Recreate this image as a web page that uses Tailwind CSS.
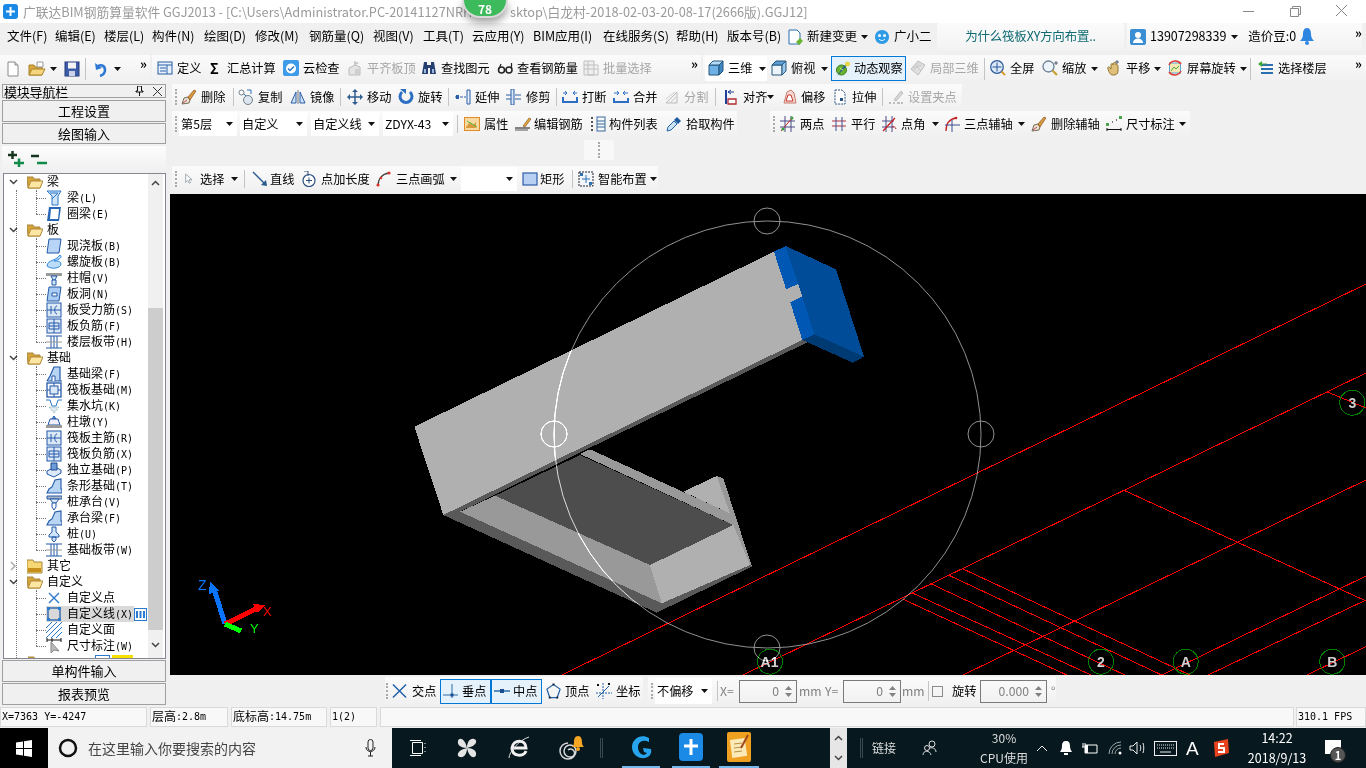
<!DOCTYPE html>
<html lang="zh">
<head>
<meta charset="UTF-8">
<title>GGJ2013</title>
<script src="https://cdn.jsdelivr.net/npm/@tailwindcss/browser@4"></script>
</head>
<body class="bg-[#f0f0f0]">

<!-- shared icons -->
<svg class="absolute w-0 h-0">
  <symbol id="car" viewBox="0 0 7 4"><path d="M0 0h7L3.500 4z" fill="#111"/></symbol>
  <symbol id="new" viewBox="0 0 16 16"><path d="M3 1h7l3 3v11H3z" fill="#fff" stroke="#8a8a8a"/><path d="M10 1v3h3" fill="#ddd" stroke="#8a8a8a"/></symbol>
  <symbol id="open" viewBox="0 0 18 16"><path d="M1 4h5l1 2h7v8H1z" fill="#d9a63c" stroke="#a98328"/><path d="M9 1h6v5H9z" fill="#fff" stroke="#999"/><path d="M1 14l3-6h13l-3 6z" fill="#f6d57f" stroke="#a98328"/></symbol>
  <symbol id="save" viewBox="0 0 16 16"><rect x="1" y="1" width="14" height="14" fill="#3d5ca8" stroke="#223a78"/><rect x="4" y="1.500" width="8" height="6" fill="#f4f4f4"/><rect x="5" y="10" width="6" height="5" fill="#c9d3ea"/></symbol>
  <symbol id="undo" viewBox="0 0 16 16"><path d="M2 2l1 7 6-2z" fill="#2c78d4"/><path d="M4 6c3-3 8-2 8 3 0 3-2 5-5 6" fill="none" stroke="#2c78d4" stroke-width="2.500"/></symbol>
  <symbol id="def" viewBox="0 0 16 16"><rect x="1" y="2" width="14" height="12" fill="#e6f0fa" stroke="#2a5ea8"/><path d="M1 5h14M3 8h6M3 11h6M10 5v9" stroke="#2a5ea8"/></symbol>
  <symbol id="cloud" viewBox="0 0 16 16"><rect width="16" height="16" rx="2" fill="#3d9be9"/><circle cx="8" cy="8.500" r="5" fill="#fff"/><path d="M5 8.500l2 2 4-4" stroke="#2a78c4" stroke-width="1.500" fill="none"/></symbol>
  <symbol id="flat" viewBox="0 0 16 16"><path d="M2 15V8l6-3 5 2v8z" fill="#e4e4e4" stroke="#bcbcbc"/><path d="M7 1l5 2-5 3z" fill="#c8c8c8"/><path d="M8 9h4v6H8z" fill="#cfcfcf"/></symbol>
  <symbol id="bino" viewBox="0 0 16 16"><path d="M3 2h3v3h4V2h3l2 12H9V8H7v6H1z" fill="#27406f"/><path d="M3 9h2v4H3zM11 9h2v4h-2z" fill="#9db6dd"/></symbol>
  <symbol id="glass" viewBox="0 0 16 16"><circle cx="4.500" cy="10" r="3" fill="none" stroke="#222" stroke-width="1.500"/><circle cx="12" cy="10" r="3" fill="none" stroke="#222" stroke-width="1.500"/><path d="M2 9l2-5M14.500 9V3M7.500 10h1.500" stroke="#222" stroke-width="1.200"/></symbol>
  <symbol id="batch" viewBox="0 0 16 16"><path d="M1 1h10v14H1z" fill="#eee" stroke="#c0c0c0"/><path d="M1 5h14v10H5M1 9h14M5 1v14" fill="none" stroke="#c0c0c0"/></symbol>
  <symbol id="cube" viewBox="0 0 16 16"><path d="M1 5h10v10H1z" fill="#6fb1e4" stroke="#24577f"/><path d="M1 5l4-4h10l-4 4z" fill="#b6dbf5" stroke="#24577f"/><path d="M11 5l4-4v10l-4 4z" fill="#3f86bf" stroke="#24577f"/></symbol>
  <symbol id="topv" viewBox="0 0 16 16"><path d="M1 5h10v10H1z" fill="#e8f2fb" fill-opacity=".7" stroke="#24577f"/><path d="M1 5l4-4h10l-4 4z" fill="#5c9ed3" stroke="#24577f"/><path d="M11 5l4-4v10l-4 4z" fill="#9cc7e8" stroke="#24577f"/></symbol>
  <symbol id="orbit" viewBox="0 0 16 16"><circle cx="6.500" cy="9" r="5" fill="#69b52f" stroke="#3a7a18"/><path d="M2 15l6-9 3-3 1 1-3 4z" fill="#2d5f88"/><circle cx="12.500" cy="3" r="2.500" fill="#e7d84a"/><path d="M5 7l3 2" stroke="#c3e69a"/></symbol>
  <symbol id="loc3" viewBox="0 0 16 16"><path d="M8 1l7 4-7 10-7-6z" fill="#e0e0e0" stroke="#bdbdbd"/><path d="M5 4l6 7M9 3l-5 7M3 8l9-3" stroke="#c8c8c8"/></symbol>
  <symbol id="full" viewBox="0 0 16 16"><circle cx="7" cy="7" r="6.300" fill="#dae8f8" stroke="#2b579a" stroke-width="1.200"/><path d="M7 2.500v9M2.500 7h9" stroke="#2b579a"/><path d="M11.500 11.500L15 15" stroke="#d89a2e" stroke-width="2"/></symbol>
  <symbol id="zoom" viewBox="0 0 16 16"><circle cx="6.500" cy="6.500" r="5.500" fill="#edf3fb" stroke="#6c7f96" stroke-width="1.300"/><path d="M10.500 10.500L15 15" stroke="#caa033" stroke-width="2.200"/><path d="M14 1v4M12 3h4" stroke="#345" stroke-width=".8"/></symbol>
  <symbol id="pan" viewBox="0 0 16 16"><path d="M2 9c-1-2 1-3 2-1l1 1V5c0-2 2-2 2 0V4c0-2 3-2 3 0v1c1-1 2 0 2 1v5c0 3-2 4-5 4-3 0-4-3-5-6z" fill="#dfc07a" stroke="#907232"/><path d="M11 0v4M9 2h4" stroke="#345" stroke-width=".8"/></symbol>
  <symbol id="scr" viewBox="0 0 16 16"><rect x="2.500" y="3" width="11" height="10" fill="#f4e9b5" stroke="#5aa6d8"/><path d="M4 11l3-4 2 2 3-3" stroke="#55a630" fill="none"/><path d="M2 5a7 7 0 0 1 12-1M14 11a7 7 0 0 1-12 1" fill="none" stroke="#dc3b30" stroke-width="1.500"/></symbol>
  <symbol id="floor" viewBox="0 0 16 16"><path d="M3 4h12v2H3zM3 8h12v2H3zM3 12h12v2H3z" fill="#2b6fb1"/><path d="M0 4l4-3v6z" fill="#3fa535"/><path d="M3 4h6" stroke="#3fa535"/></symbol>
  <symbol id="del" viewBox="0 0 16 16"><path d="M1 15l2-6 4-1 2 3-1 3z" fill="#e9e2d0" stroke="#7a6f56"/><path d="M7 8l6-7 2 1-6 9z" fill="#d89a3a" stroke="#7a3f12" stroke-width=".6"/><path d="M2 14l4-3" stroke="#c3476a"/></symbol>
  <symbol id="copy" viewBox="0 0 16 16"><circle cx="3.500" cy="3.500" r="2.500" fill="#fff" stroke="#6f7d8a"/><circle cx="10" cy="11" r="4.500" fill="#dde6ee" stroke="#6f7d8a"/><path d="M6 5l2 2" stroke="#2a6fb3"/><path d="M9 1h4v4" fill="none" stroke="#2a6fb3"/></symbol>
  <symbol id="mirr" viewBox="0 0 16 16"><path d="M8 1v14" stroke="#777"/><path d="M6 3v11H1z" fill="#cfe2f4" stroke="#2a5ea8"/><path d="M10 3v11h5z" fill="#cfe2f4" stroke="#2a5ea8"/></symbol>
  <symbol id="move" viewBox="0 0 16 16"><path d="M8 1v14M1 8h14" stroke="#2f5d8f" stroke-width="1.500"/><path d="M8 0l3 3H5zM8 16l3-3H5zM0 8l3-3v6zM16 8l-3-3v6z" fill="#2f5d8f"/></symbol>
  <symbol id="rot" viewBox="0 0 16 16"><path d="M4 3a6 6 0 1 0 8 0" fill="none" stroke="#2b6ec2" stroke-width="3"/><path d="M2 0h6v5z" fill="#2b6ec2"/></symbol>
  <symbol id="ext" viewBox="0 0 16 16"><path d="M0 8h3M5 8h3M9 8h2" stroke="#2b5ea8"/><path d="M12 1h3v14h-3z" fill="#e8f0fa" stroke="#2b5ea8"/><path d="M1 6h3v4H1z" fill="#2b5ea8"/></symbol>
  <symbol id="trim" viewBox="0 0 16 16"><path d="M5 0h3v16H5z" fill="#d8e5f5" stroke="#2b5ea8"/><path d="M0 6h5M0 10h5M9 6h6M9 10h6" stroke="#2b5ea8"/></symbol>
  <symbol id="brk" viewBox="0 0 16 16"><path d="M1 8V13h14V8" fill="none" stroke="#2b6ec2" stroke-width="2"/><path d="M1 4h4M15 4h-4M3 2l2 2-2 2M13 2l-2 2 2 2" fill="none" stroke="#2b6ec2"/></symbol>
  <symbol id="mrg" viewBox="0 0 16 16"><path d="M1 9V13h14V9" fill="none" stroke="#2b6ec2" stroke-width="2"/><path d="M1 4h5M15 4h-5M4 2l2 2-2 2M12 2l-2 2 2 2" fill="none" stroke="#2b6ec2"/></symbol>
  <symbol id="spl" viewBox="0 0 16 16"><path d="M2 14L13 3v11z" fill="#f0f0f0" stroke="#bdbdbd"/><path d="M2 10l9-7M6 14l7-7" stroke="#cfcfcf"/></symbol>
  <symbol id="alg" viewBox="0 0 16 16"><path d="M2 1h2v14H2z" fill="#1f3f99"/><path d="M5 3h6M5 3l3-2M5 3l3 2" stroke="#1f3f99" fill="none"/><path d="M5 10h8v5H5z" fill="#fff" stroke="#b02a30" stroke-width="1.300"/></symbol>
  <symbol id="ofs" viewBox="0 0 16 16"><path d="M3 14L6 3l4-2 3 3 2 10z" fill="#f5d9d2" stroke="#c97a6c"/><path d="M5 12l2-6h3l2 6z" fill="#fff" stroke="#c83a2e"/></symbol>
  <symbol id="str" viewBox="0 0 16 16"><path d="M3 1h7l3 3v11H3z" fill="#fff" stroke="#29527f" stroke-dasharray="2 1"/><path d="M8 9h3v3H8z" fill="#29527f"/></symbol>
  <symbol id="grip" viewBox="0 0 16 16"><path d="M6 11l7-9 2 2-7 8z" fill="#d8d8d8" stroke="#bdbdbd"/><path d="M1 14h2M5 14h2M9 14h3M13 14h2" stroke="#bdbdbd" stroke-width="2"/></symbol>
  <symbol id="attr" viewBox="0 0 16 16"><rect x=".500" y="1.500" width="15" height="13" fill="#f9d9a3" stroke="#e28b27"/><path d="M2 11l4-5 3 3 3-3v6H2z" fill="#d89a3a"/><path d="M3 5l10 6" stroke="#5b4"/></symbol>
  <symbol id="edit" viewBox="0 0 18 16"><path d="M1 12h15" stroke="#111"/><path d="M1 14h13" stroke="#111" stroke-width=".7"/><path d="M9 10l6-8 2 1-6 8z" fill="#e3a53d" stroke="#7a4b12" stroke-width=".6"/></symbol>
  <symbol id="list" viewBox="0 0 16 16"><path d="M1 2h3M1 6h3M1 10h3M1 14h3" stroke="#555" stroke-width="2" stroke-dasharray="2 1"/><rect x="7" y="1" width="8" height="14" fill="#f5f8fb" stroke="#3b6a99"/><path d="M7 5h8M7 8h8M7 11h8" stroke="#3b6a99"/></symbol>
  <symbol id="pick" viewBox="0 0 16 16"><path d="M1 15l1-4 6-6 3 3-6 6z" fill="#cfe3f7" stroke="#2366a8"/><path d="M8 4l3-3 4 4-3 3z" fill="#1f5c9f"/></symbol>
  <symbol id="twop" viewBox="0 0 16 16"><path d="M0 5h15M0 11h15M5 0v16M11 0v16" stroke="#4a4a8a"/><path d="M1 15L13 1" stroke="#c23030"/><circle cx="3" cy="13" r="1.500" fill="#3ba33b"/><circle cx="12" cy="2" r="1.500" fill="#3ba33b"/></symbol>
  <symbol id="para" viewBox="0 0 16 16"><path d="M1 5h14M1 10h14" stroke="#b02c3c"/><path d="M5 1v14M11 1v14" stroke="#3a4f8f"/></symbol>
  <symbol id="ang" viewBox="0 0 16 16"><path d="M0 5h12M0 11h12M4 0v16M10 0v16" stroke="#4a4a8a"/><path d="M1 15L13 2" stroke="#c82020" stroke-width="1.300"/><path d="M10 11a3 3 0 0 1 4 2" stroke="#c82020" fill="none"/></symbol>
  <symbol id="thr" viewBox="0 0 16 16"><path d="M2 15c0-7 3-12 10-13" fill="none" stroke="#c82020" stroke-width="1.300"/><path d="M1 9h15M8 4v12" stroke="#3a4f8f"/><circle cx="12" cy="2" r="1.300" fill="#c82020"/></symbol>
  <symbol id="dim" viewBox="0 0 16 16"><path d="M1 12v3M15 12v3M1 13.500h14" stroke="#111"/><rect x="0" y="7" width="3" height="3" fill="#4aa64a"/><rect x="13" y="0" width="3" height="3" fill="#4aa64a"/><path d="M6 6h1M10 4h1" stroke="#777" stroke-width="2"/></symbol>
  <symbol id="cur" viewBox="0 0 10 16"><path d="M1 1v12l3-3 2 4 2-1-2-4h4z" fill="#fff" stroke="#7b8794"/></symbol>
  <symbol id="lin" viewBox="0 0 16 16"><path d="M1 1l13 13" stroke="#2a5b8f" stroke-width="1.500"/><path d="M15 15l-6-1 5-5z" fill="#2a5b8f"/></symbol>
  <symbol id="lng" viewBox="0 0 16 16"><circle cx="8" cy="9.500" r="6" fill="#fff" stroke="#2a4f7f" stroke-width="1.200"/><path d="M8 6.500v6M5 9.500h6" stroke="#2a4f7f"/><path d="M3 0h4v5" fill="none" stroke="#2a4f7f"/></symbol>
  <symbol id="arc" viewBox="0 0 16 16"><path d="M2 15C2 8 6 3 13 2" fill="none" stroke="#444" stroke-width="1.300"/><circle cx="2" cy="14" r="1.600" fill="#d9342b"/><circle cx="13" cy="2" r="1.600" fill="#d9342b"/><circle cx="5" cy="7" r="1.300" fill="#d9342b"/></symbol>
  <symbol id="rct" viewBox="0 0 16 16"><rect x="1" y="2" width="14" height="12" fill="#b8d0f2" stroke="#2f5da8" stroke-width="1.200"/></symbol>
  <symbol id="smart" viewBox="0 0 16 16"><rect x="1" y="1" width="14" height="14" fill="#f3f6fa" stroke="#223" stroke-dasharray="2 1"/><path d="M8 4v8M4 8h8" stroke="#2d6fb3"/><rect x="2" y="2" width="3" height="3" fill="#2d6fb3"/><rect x="11" y="11" width="3" height="3" fill="#2d6fb3"/></symbol>
  <symbol id="xpt" viewBox="0 0 16 16"><path d="M1 1l14 14M15 1L1 15" stroke="#1d5fa8" stroke-width="1.500"/></symbol>
  <symbol id="vpt" viewBox="0 0 16 16"><path d="M9 1v14M0 12h15" stroke="#2c6aa8"/><rect x="7.500" y="10.500" width="3" height="3" fill="#1a4f8f"/></symbol>
  <symbol id="mpt" viewBox="0 0 16 16"><path d="M0 8h16" stroke="#2c6aa8" stroke-width="1.500"/><rect x="6" y="6" width="4" height="4" fill="#1a4f8f"/></symbol>
  <symbol id="vtx" viewBox="0 0 16 16"><path d="M8 1l7 5-3 9H4L1 6z" fill="none" stroke="#2463a8" stroke-width="1.300"/><rect x="7" y="0" width="2" height="2" fill="#123"/><rect x="3" y="14" width="2" height="2" fill="#123"/><rect x="11" y="14" width="2" height="2" fill="#123"/></symbol>
  <symbol id="crd" viewBox="0 0 16 16"><path d="M7 0v16M0 10h16" stroke="#2463a8" stroke-dasharray="2 1"/><path d="M2 14L13 3" stroke="#2463a8"/><path d="M1 1l2 2M3 1L1 3M12 0l2 2M14 0l-2 2" stroke="#111"/></symbol>
  <symbol id="fo" viewBox="0 0 16 16"><path d="M0 3h6l1 2h6v9H1z" fill="#d6a23a" stroke="#a8863e"/><path d="M1 14l3-7h12l-3 7z" fill="#fde6a4" stroke="#b08a30"/></symbol>
  <symbol id="fc" viewBox="0 0 16 16"><path d="M0 2h6l1 2h8v11H0z" fill="#f7d774" stroke="#a8863e"/><path d="M1 10h13v4H1z" fill="#c68f1c"/></symbol>
  <symbol id="dn" viewBox="0 0 9 6"><path d="M1 1l3.500 3.500L8 1" fill="none" stroke="#444" stroke-width="1.500"/></symbol>
  <symbol id="rg" viewBox="0 0 9 10"><path d="M2 1l4 4-4 4" fill="none" stroke="#aaa" stroke-width="1.500"/></symbol>
  <symbol id="t1" viewBox="0 0 16 16"><path d="M1 1h14l-3 5v9H6V6z" fill="#cfe4f8" stroke="#2b79c9"/><path d="M4 3h8l-6 6" stroke="#2b79c9" fill="none"/></symbol>
  <symbol id="t2" viewBox="0 0 16 16"><path d="M3 1h12l-2 14H1z" fill="#2a66b8"/><path d="M5 3h8l-1 10H4z" fill="#fff"/></symbol>
  <symbol id="t3" viewBox="0 0 16 16"><path d="M3 1h12l-2 14H1z" fill="#b8d4f6" stroke="#2259a8"/></symbol>
  <symbol id="t4" viewBox="0 0 16 16"><path d="M1 12C2 5 9 8 14 1c3 2-1 5-6 6 3 0 7 0 7 3 0 4-9 6-14 2z" fill="#bcdcf8" stroke="#2f8ae0"/></symbol>
  <symbol id="t5" viewBox="0 0 16 16"><path d="M0 3h16v3H0z" fill="#9a9a9a"/><path d="M5 6h6l-2 4H7z" fill="#cfe4f8" stroke="#2459a8"/><path d="M6 10h4v5H6z" fill="#cfe4f8" stroke="#2459a8"/></symbol>
  <symbol id="t6" viewBox="0 0 16 16"><path d="M3 1h12l-2 14H1z" fill="#a9caf2" stroke="#2259a8"/><path d="M6 7h5v3H6z" fill="#fff" stroke="#2259a8"/></symbol>
  <symbol id="t7" viewBox="0 0 16 16"><rect x="1" y="1" width="14" height="14" fill="#dbe8f8" stroke="#2259a8"/><path d="M1 8h14M5 4v8M11 4c-3 0-3 8 0 8" stroke="#2259a8" fill="none"/></symbol>
  <symbol id="t8" viewBox="0 0 16 16"><rect x="1" y="1" width="14" height="14" fill="#dbe8f8" stroke="#2259a8"/><path d="M3 5h10v6H3zM8 1v14M3 8h10" stroke="#2259a8" fill="none"/></symbol>
  <symbol id="t9" viewBox="0 0 16 16"><path d="M0 2h16M0 14h16M5 2v12M11 2v12M8 2v12" stroke="#2259a8"/><path d="M0 8h16" stroke="#999"/></symbol>
  <symbol id="t10" viewBox="0 0 16 16"><path d="M1 15l3-5 4-9h6v14h2M1 15h15" fill="#b9d5f4" stroke="#2259a8" stroke-width="1.200"/><path d="M6 15v-5h3v5" fill="#fff" stroke="#2259a8"/></symbol>
  <symbol id="t11" viewBox="0 0 16 16"><rect x="1" y="1" width="14" height="14" fill="#fff" stroke="#2259a8" stroke-width="1.300"/><rect x="4" y="4" width="8" height="8" fill="#dbe8f8" stroke="#2259a8"/><path d="M1 8h3M12 8h3M8 1v3M8 12v3" stroke="#2259a8"/></symbol>
  <symbol id="t12" viewBox="0 0 16 16"><path d="M0 2h4l2 6h4l2-6h4" fill="none" stroke="#2b79c9"/><path d="M3 9l5 6 5-6z" fill="#dfe8f0" stroke="#8aa" stroke-dasharray="1 1"/></symbol>
  <symbol id="t13" viewBox="0 0 16 16"><path d="M6 5l2-3 2 3z" fill="#6aa0e0" stroke="#2259a8"/><path d="M4 5h8l2 6H2z" fill="#eef" stroke="#2259a8"/><rect x="0" y="11" width="16" height="3" fill="#9a9a9a"/></symbol>
  <symbol id="t14" viewBox="0 0 16 16"><path d="M1 9l8-4 6 3v3l-7 4-7-3z" fill="#dce9f8" stroke="#2259a8"/><path d="M5 1h6v7H5z" fill="#6d9bd8" stroke="#1f4a8f"/></symbol>
  <symbol id="t15" viewBox="0 0 16 16"><path d="M1 15l2-4 3-2 3-7 6-1v10h1v4z" fill="#b9d5f4" stroke="#2259a8" stroke-width="1.100"/></symbol>
  <symbol id="t16" viewBox="0 0 16 16"><path d="M1 2h15v3H1z" fill="#b0b6c0" stroke="#2259a8"/><path d="M4 5h9l-3 4H7z" fill="#dce9f8" stroke="#2259a8"/><path d="M6 9h4v4l-2 3-2-3z" fill="#fff" stroke="#2259a8"/></symbol>
  <symbol id="t17" viewBox="0 0 16 16"><path d="M6 1h4v5l3 3v2H3V9l3-3zM6 11h4v3l-2 2-2-2z" fill="#cfe4f8" stroke="#2259a8"/></symbol>
  <symbol id="t18" viewBox="0 0 16 16"><path d="M3 3l10 10M13 3L3 13" stroke="#2c78c8" stroke-width="1.400"/></symbol>
  <symbol id="t19" viewBox="0 0 16 16"><rect x="2" y="2" width="12" height="12" fill="none" stroke="#1f5faa" stroke-width="1.300"/><rect x="1" y="1" width="3" height="3" fill="#2b7bd0"/><rect x="12" y="1" width="3" height="3" fill="#2b7bd0"/><rect x="1" y="12" width="3" height="3" fill="#2b7bd0"/><rect x="12" y="12" width="3" height="3" fill="#2b7bd0"/></symbol>
  <symbol id="t20" viewBox="0 0 16 16"><path d="M0 6l6-6M0 11L11 0M0 16L16 0M5 16L16 5M10 16l6-6" stroke="#2c78c8"/></symbol>
  <symbol id="t21" viewBox="0 0 16 16"><path d="M1 2h14M1 0v4M6 0v4M15 0v4" stroke="#111"/><path d="M5 4v11l3-3 5 1z" fill="#bbb" stroke="#888"/></symbol>
</svg>

<div class="relative w-[1366px] h-[768px] overflow-hidden flex flex-col bg-[#f0f0f0] whitespace-nowrap text-[12.2px] text-black font-['Noto_Sans_CJK_SC',sans-serif] [&_svg]:shrink-0">

  <!-- title bar -->
  <header class="relative h-[23px] shrink-0 bg-white flex items-center pl-[3px] text-[12.75px] text-[#9a9a9a]">
    <div class="w-[15px] h-[15px] mr-[5px] rounded-[3px] bg-[#1a8ae6] flex items-center justify-center">
      <svg class="w-[11px] h-[11px]" viewBox="0 0 11 11"><path d="M5.500 1v9M1 5.500h9" stroke="#fff" stroke-width="2" fill="none"/></svg>
    </div>
    <span class="w-[439px]">广联达BIM钢筋算量软件 GGJ2013 - [C:\Users\Administrator.PC-20141127NRHI</span>
    <span class="ml-[48px]">sktop\白龙村-2018-02-03-20-08-17(2666版).GGJ12]</span>
    <div class="absolute left-[462px] top-0 w-[46px] h-[18px] rounded-b-[23px] bg-[#3dbb5c] border-x-2 border-b-2 border-[#d8d8d8] shadow-[0_4px_8px_rgba(0,0,0,0.4)] flex items-end justify-center text-white font-bold text-[12px] leading-[15px]">78</div>
    <svg class="absolute left-[1243px] top-[6px] w-[11px] h-[11px]" viewBox="0 0 11 11"><path d="M0 5.500h11" stroke="#888"/></svg>
    <svg class="absolute left-[1290px] top-[6px] w-[11px] h-[11px]" viewBox="0 0 11 11"><path d="M.5 2.500h8v8h-8zM2.500 2.500v-2h8v8h-2" fill="none" stroke="#888"/></svg>
    <svg class="absolute left-[1336px] top-[5px] w-[11px] h-[11px]" viewBox="0 0 11 11"><path d="M0 0l11 11M11 0L0 11" stroke="#888"/></svg>
  </header>

  <!-- menu bar -->
  <nav class="h-[32px] shrink-0 flex items-start pl-[7px] text-[12.5px] bg-[#f0f0f0]">
    <div class="h-[27px] flex items-center">
      <div class="w-[48px]">文件(F)</div><div class="w-[49px]">编辑(E)</div><div class="w-[48px]">楼层(L)</div><div class="w-[52px]">构件(N)</div><div class="w-[51px]">绘图(D)</div><div class="w-[54px]">修改(M)</div><div class="w-[64px]">钢筋量(Q)</div><div class="w-[50px]">视图(V)</div><div class="w-[49px]">工具(T)</div><div class="w-[61px]">云应用(Y)</div><div class="w-[70px]">BIM应用(I)</div><div class="w-[73px]">在线服务(S)</div><div class="w-[51px]">帮助(H)</div><div class="w-[60px]">版本号(B)</div>
      <div class="w-[74px] flex items-center gap-1">
        <svg class="w-4 h-4" viewBox="0 0 16 16"><path d="M2 1h8l3 3v11H2z" fill="#fff" stroke="#2b6fb3"/><path d="M9 13l4-4 3 3-4 4z" fill="#6ab52f"/></svg>新建变更</div>
      <svg class="w-[13px] h-[4px]"><use href="#car" width="7" height="4"/></svg>
      <div class="w-[63px] flex items-center gap-1">
        <svg class="w-4 h-4" viewBox="0 0 16 16"><path d="M8 1c4 0 7 3 7 7s-3 7-7 7-7-3-7-7 3-7 7-7z" fill="#2e9be6"/><circle cx="5.500" cy="6.500" r="1.500" fill="#fff"/><circle cx="10.500" cy="6.500" r="1.500" fill="#fff"/><path d="M5 10c2 2 4 2 6 0" stroke="#fff" fill="none"/></svg>广小二</div>
      <div class="w-[187px] h-[27px] bg-linear-to-b from-[#fbfbfb] to-[#f3f3f3] rounded-t-[2px] flex items-center justify-center text-[#0f6a72] tracking-[-0.2px]">为什么筏板XY方向布置..</div>
      <div class="w-[235px] h-[27px] ml-[3px] bg-linear-to-b from-[#fbfbfb] to-[#f3f3f3] flex items-center pl-[3px]">
        <svg class="w-4 h-4 mr-1" viewBox="0 0 16 16"><rect width="16" height="16" rx="2" fill="#3a8fd4"/><circle cx="8" cy="6" r="3" fill="#fff"/><path d="M3 14c0-6 10-6 10 0z" fill="#fff"/></svg>
        <div class="w-[83px]">13907298339</div>
        <svg class="w-[17px] h-[4px]"><use href="#car" width="7" height="4"/></svg>
        <div class="w-[53px]">造价豆:0</div>
        <svg class="w-[14px] h-[17px] mr-[41px]" viewBox="0 0 14 17"><path d="M7 0c3 0 4 3 4 6 0 3 1 5 3 7H0c2-2 3-4 3-7 0-3 1-6 4-6z" fill="#2f86e0"/><circle cx="7" cy="15" r="2" fill="#2f86e0"/></svg>
        <span class="font-bold text-[13px] leading-none -mt-[8px]">»</span>
      </div>
    </div>
  </nav>

  <!-- main toolbar -->
  <div class="h-[27px] shrink-0 flex items-center bg-[#f0f0f0]">
    <div class="w-[150px] h-[27px] flex items-center pl-[5px] bg-linear-to-b from-[#fbfbfb] to-[#f0f0f0]">
      <div class="w-[23px]"><svg class="w-4 h-4"><use href="#new"/></svg></div>
      <div class="w-[22px]"><svg class="w-[18px] h-4"><use href="#open"/></svg></div>
      <svg class="w-[14px] h-[4px]"><use href="#car" width="7" height="4"/></svg>
      <div class="w-[21px]"><svg class="w-4 h-4"><use href="#save"/></svg></div>
      <i class="w-[8px] h-[22px] border-l border-[#c4c4c4]"></i>
      <div class="w-[21px]"><svg class="w-4 h-4"><use href="#undo"/></svg></div>
      <svg class="w-[26px] h-[4px]"><use href="#car" width="7" height="4"/></svg>
      <span class="font-bold text-[13px] leading-none -mt-[10px]">»</span>
    </div>
    <div class="ml-[2px] w-[549px] h-[27px] flex items-center pl-[5px] bg-linear-to-b from-[#fbfbfb] to-[#f0f0f0]">
      <div class="w-[53px] flex items-center gap-1"><svg class="w-4 h-4"><use href="#def"/></svg>定义</div>
      <div class="w-[73px] flex items-center gap-[7px]"><b class="w-[10px] text-[14px] leading-none">Σ</b>汇总计算</div>
      <div class="w-[64px] flex items-center gap-1"><svg class="w-4 h-4"><use href="#cloud"/></svg>云检查</div>
      <div class="w-[74px] flex items-center gap-1 text-[#a6a6a6]"><svg class="w-4 h-4"><use href="#flat"/></svg>平齐板顶</div>
      <div class="w-[76px] flex items-center gap-1"><svg class="w-4 h-4"><use href="#bino"/></svg>查找图元</div>
      <div class="w-[86px] flex items-center gap-1"><svg class="w-4 h-4"><use href="#glass"/></svg>查看钢筋量</div>
      <div class="w-[108px] flex items-center gap-1 text-[#a6a6a6]"><svg class="w-4 h-4"><use href="#batch"/></svg>批量选择</div>
      <span class="font-bold text-[13px] leading-none -mt-[10px]">»</span>
    </div>
    <div class="ml-[2px] w-[663px] h-[27px] flex items-center pl-[2px] bg-linear-to-b from-[#fbfbfb] to-[#f0f0f0]">
      <div class="w-[62px] h-[25px] bg-white flex items-center pl-[3px]">
        <div class="w-[51px] flex items-center gap-1"><svg class="w-4 h-4"><use href="#cube"/></svg>三维</div>
        <svg class="w-[8px] h-[4px]"><use href="#car" width="7" height="4"/></svg>
      </div>
      <div class="ml-[4px] w-[50px] flex items-center gap-1"><svg class="w-4 h-4"><use href="#topv"/></svg>俯视</div>
      <svg class="w-[10px] h-[4px]"><use href="#car" width="7" height="4"/></svg>
      <div class="w-[75px] h-[25px] border border-[#0078d7] bg-[#e5f1fb] flex items-center gap-[3px] pl-[3px]"><svg class="w-4 h-4"><use href="#orbit"/></svg>动态观察</div>
      <div class="ml-[4px] w-[74px] flex items-center gap-1 text-[#a6a6a6]"><svg class="w-4 h-4"><use href="#loc3"/></svg>局部三维</div>
      <i class="w-[6px] h-[22px] border-l border-[#c4c4c4]"></i>
      <div class="w-[52px] flex items-center gap-1"><svg class="w-4 h-4"><use href="#full"/></svg>全屏</div>
      <div class="w-[49px] flex items-center gap-1"><svg class="w-4 h-4"><use href="#zoom"/></svg>缩放</div>
      <svg class="w-[15px] h-[4px]"><use href="#car" width="7" height="4"/></svg>
      <div class="w-[48px] flex items-center gap-1"><svg class="w-4 h-4"><use href="#pan"/></svg>平移</div>
      <svg class="w-[13px] h-[4px]"><use href="#car" width="7" height="4"/></svg>
      <div class="w-[73px] flex items-center gap-1"><svg class="w-4 h-4"><use href="#scr"/></svg>屏幕旋转</div>
      <svg class="w-[10px] h-[4px]"><use href="#car" width="7" height="4"/></svg>
      <i class="w-[8px] h-[22px] border-l border-[#c4c4c4]"></i>
      <div class="w-[97px] flex items-center gap-1"><svg class="w-4 h-4"><use href="#floor"/></svg>选择楼层</div>
      <span class="font-bold text-[13px] leading-none -mt-[10px]">»</span>
    </div>
  </div>

  <div class="mt-[2px] h-[622px] shrink-0 flex">
    <!-- module navigation panel -->
    <aside class="w-[170px] shrink-0 flex flex-col pl-[2px] pr-[4px] text-[13px]">
      <div class="h-[14px] border border-[#a0a0a0] flex items-center justify-between pl-[1px] pr-[3px]">
        <span class="leading-none tracking-[-0.2px]">模块导航栏</span>
        <div class="flex items-center gap-[9px]">
          <svg class="w-[9px] h-[10px]" viewBox="0 0 9 10"><path d="M2.500 0h4v5h1.500v1H1V5h1.500zM4.500 6v4" fill="none" stroke="#111"/></svg>
          <svg class="w-[9px] h-[9px]" viewBox="0 0 9 9"><path d="M0 0l9 9M9 0L0 9" stroke="#333"/></svg>
        </div>
      </div>
      <div class="mt-[2px] h-[22px] border border-[#a0a0a0] flex items-center justify-center">工程设置</div>
      <div class="mt-[1px] h-[21px] border border-[#a0a0a0] flex items-center justify-center">绘图输入</div>
      <div class="mt-[2px] h-[26px] bg-linear-to-b from-[#fdfdfd] to-[#f0f0f0] flex items-center gap-[6px] pl-[6px]">
        <svg class="w-[17px] h-[16px]" viewBox="0 0 17 16"><path d="M0 4h9M4.500 0v8" stroke="#17361f" stroke-width="2.500"/><path d="M6 12h10M11 7.500v8.500" stroke="#0f8a4a" stroke-width="2.500"/></svg>
        <svg class="w-[16px] h-[16px]" viewBox="0 0 16 16"><path d="M0 5h8" stroke="#17361f" stroke-width="2.500"/><path d="M6 12h10" stroke="#0f8a4a" stroke-width="2.500"/></svg>
      </div>
      <!-- component tree -->
      <div class="relative mt-[1px] ml-[1px] h-[486px] w-[163px] border border-[#828790] bg-white flex overflow-hidden text-[12px] font-['DejaVu_Sans_Mono','Noto_Sans_CJK_SC',monospace] [&_b]:font-normal [&_b]:text-[10px]">
        <i class="absolute left-[12px] top-[16px] h-[470px] border-l border-dotted border-[#777]"></i>
        <i class="absolute left-[32px] top-[16px] h-[24px] border-l border-dotted border-[#777]"></i>
        <i class="absolute left-[32px] top-[64px] h-[104px] border-l border-dotted border-[#777]"></i>
        <i class="absolute left-[32px] top-[192px] h-[184px] border-l border-dotted border-[#777]"></i>
        <i class="absolute left-[32px] top-[416px] h-[56px] border-l border-dotted border-[#777]"></i>
        <div class="relative flex-1 [&>div]:h-4 [&>div]:flex [&>div]:items-center">
          <div class="pl-[5px]"><svg class="w-[9px] h-[6px] mr-[9px]"><use href="#dn"/></svg><svg class="w-4 h-4 mr-1"><use href="#fo"/></svg>梁</div>
          <div class="pl-[32px]"><i class="w-[10px] border-t border-dotted border-[#777]"></i><svg class="w-4 h-4 mr-[5px]"><use href="#t1"/></svg>梁<b>(L)</b></div>
          <div class="pl-[32px]"><i class="w-[10px] border-t border-dotted border-[#777]"></i><svg class="w-4 h-4 mr-[5px]"><use href="#t2"/></svg>圈梁<b>(E)</b></div>
          <div class="pl-[5px]"><svg class="w-[9px] h-[6px] mr-[9px]"><use href="#dn"/></svg><svg class="w-4 h-4 mr-1"><use href="#fo"/></svg>板</div>
          <div class="pl-[32px]"><i class="w-[10px] border-t border-dotted border-[#777]"></i><svg class="w-4 h-4 mr-[5px]"><use href="#t3"/></svg>现浇板<b>(B)</b></div>
          <div class="pl-[32px]"><i class="w-[10px] border-t border-dotted border-[#777]"></i><svg class="w-4 h-4 mr-[5px]"><use href="#t4"/></svg>螺旋板<b>(B)</b></div>
          <div class="pl-[32px]"><i class="w-[10px] border-t border-dotted border-[#777]"></i><svg class="w-4 h-4 mr-[5px]"><use href="#t5"/></svg>柱帽<b>(V)</b></div>
          <div class="pl-[32px]"><i class="w-[10px] border-t border-dotted border-[#777]"></i><svg class="w-4 h-4 mr-[5px]"><use href="#t6"/></svg>板洞<b>(N)</b></div>
          <div class="pl-[32px]"><i class="w-[10px] border-t border-dotted border-[#777]"></i><svg class="w-4 h-4 mr-[5px]"><use href="#t7"/></svg>板受力筋<b>(S)</b></div>
          <div class="pl-[32px]"><i class="w-[10px] border-t border-dotted border-[#777]"></i><svg class="w-4 h-4 mr-[5px]"><use href="#t8"/></svg>板负筋<b>(F)</b></div>
          <div class="pl-[32px]"><i class="w-[10px] border-t border-dotted border-[#777]"></i><svg class="w-4 h-4 mr-[5px]"><use href="#t9"/></svg>楼层板带<b>(H)</b></div>
          <div class="pl-[5px]"><svg class="w-[9px] h-[6px] mr-[9px]"><use href="#dn"/></svg><svg class="w-4 h-4 mr-1"><use href="#fo"/></svg>基础</div>
          <div class="pl-[32px]"><i class="w-[10px] border-t border-dotted border-[#777]"></i><svg class="w-4 h-4 mr-[5px]"><use href="#t10"/></svg>基础梁<b>(F)</b></div>
          <div class="pl-[32px]"><i class="w-[10px] border-t border-dotted border-[#777]"></i><svg class="w-4 h-4 mr-[5px]"><use href="#t11"/></svg>筏板基础<b>(M)</b></div>
          <div class="pl-[32px]"><i class="w-[10px] border-t border-dotted border-[#777]"></i><svg class="w-4 h-4 mr-[5px]"><use href="#t12"/></svg>集水坑<b>(K)</b></div>
          <div class="pl-[32px]"><i class="w-[10px] border-t border-dotted border-[#777]"></i><svg class="w-4 h-4 mr-[5px]"><use href="#t13"/></svg>柱墩<b>(Y)</b></div>
          <div class="pl-[32px]"><i class="w-[10px] border-t border-dotted border-[#777]"></i><svg class="w-4 h-4 mr-[5px]"><use href="#t7"/></svg>筏板主筋<b>(R)</b></div>
          <div class="pl-[32px]"><i class="w-[10px] border-t border-dotted border-[#777]"></i><svg class="w-4 h-4 mr-[5px]"><use href="#t8"/></svg>筏板负筋<b>(X)</b></div>
          <div class="pl-[32px]"><i class="w-[10px] border-t border-dotted border-[#777]"></i><svg class="w-4 h-4 mr-[5px]"><use href="#t14"/></svg>独立基础<b>(P)</b></div>
          <div class="pl-[32px]"><i class="w-[10px] border-t border-dotted border-[#777]"></i><svg class="w-4 h-4 mr-[5px]"><use href="#t15"/></svg>条形基础<b>(T)</b></div>
          <div class="pl-[32px]"><i class="w-[10px] border-t border-dotted border-[#777]"></i><svg class="w-4 h-4 mr-[5px]"><use href="#t16"/></svg>桩承台<b>(V)</b></div>
          <div class="pl-[32px]"><i class="w-[10px] border-t border-dotted border-[#777]"></i><svg class="w-4 h-4 mr-[5px]"><use href="#t15"/></svg>承台梁<b>(F)</b></div>
          <div class="pl-[32px]"><i class="w-[10px] border-t border-dotted border-[#777]"></i><svg class="w-4 h-4 mr-[5px]"><use href="#t17"/></svg>桩<b>(U)</b></div>
          <div class="pl-[32px]"><i class="w-[10px] border-t border-dotted border-[#777]"></i><svg class="w-4 h-4 mr-[5px]"><use href="#t9"/></svg>基础板带<b>(W)</b></div>
          <div class="pl-[5px]"><svg class="w-[9px] h-[10px] mr-[9px]"><use href="#rg"/></svg><svg class="w-4 h-4 mr-1"><use href="#fc"/></svg>其它</div>
          <div class="pl-[5px]"><svg class="w-[9px] h-[6px] mr-[9px]"><use href="#dn"/></svg><svg class="w-4 h-4 mr-1"><use href="#fo"/></svg>自定义</div>
          <div class="pl-[32px]"><i class="w-[10px] border-t border-dotted border-[#777]"></i><svg class="w-4 h-4 mr-[5px]"><use href="#t18"/></svg>自定义点</div>
          <div class="pl-[32px]"><i class="w-[10px] border-t border-dotted border-[#777]"></i><div class="flex items-center h-4 w-[88px] bg-[#d9d9d9]"><svg class="w-4 h-4 mr-[5px]"><use href="#t19"/></svg>自定义线<b>(X)</b></div><svg class="w-[13px] h-[13px]" viewBox="0 0 13 13"><rect x=".5" y=".5" width="12" height="12" fill="#fff" stroke="#2b7bd0"/><path d="M3 3v7M6.500 3v7M10 3v7" stroke="#2b7bd0" stroke-width="2"/></svg></div>
          <div class="pl-[32px]"><i class="w-[10px] border-t border-dotted border-[#777]"></i><svg class="w-4 h-4 mr-[5px]"><use href="#t20"/></svg>自定义面</div>
          <div class="pl-[32px]"><i class="w-[10px] border-t border-dotted border-[#777]"></i><svg class="w-4 h-4 mr-[5px]"><use href="#t21"/></svg>尺寸标注<b>(W)</b></div>
          <div class="pl-[24px]"><svg class="w-4 h-4 mr-[51px]"><use href="#fo"/></svg><i class="w-[15px] h-[15px] border border-[#2b7bd0] bg-white"></i><i class="ml-[2px] w-[21px] h-[15px] bg-[#f6e000]"></i></div>
        </div>
        <div class="w-[15px] mr-[2px] shrink-0 flex flex-col items-center bg-[#f0f0f0]">
          <svg class="mt-[6px] w-[9px] h-[6px] rotate-180"><use href="#dn"/></svg>
          <i class="mt-[122px] w-[15px] h-[322px] bg-[#cdcdcd]"></i>
          <svg class="mt-[12px] w-[9px] h-[6px]"><use href="#dn"/></svg>
        </div>
      </div>
      <div class="mt-[1px] h-[22px] border border-[#a0a0a0] flex items-center justify-center">单构件输入</div>
      <div class="mt-[1px] h-[22px] border border-[#a0a0a0] flex items-center justify-center">报表预览</div>
    </aside>

    <!-- drawing area -->
    <main class="w-[1196px] shrink-0 flex flex-col">
      <div class="h-[26px] flex">
        <div class="ml-[2px] w-[790px] h-[26px] flex items-center pl-[3px] bg-linear-to-b from-[#fbfbfb] to-[#f0f0f0]">
          <i class="w-[6px] h-[16px] border-l-2 border-dotted border-[#aaa]"></i>
          <div class="w-[52px] flex items-center gap-1"><svg class="w-4 h-4"><use href="#del"/></svg>删除</div>
          <i class="w-[5px] h-[18px] border-l border-[#c4c4c4]"></i>
          <div class="w-[52px] flex items-center gap-1"><svg class="w-4 h-4"><use href="#copy"/></svg>复制</div>
          <div class="w-[50px] flex items-center gap-1"><svg class="w-4 h-4"><use href="#mirr"/></svg>镜像</div>
          <i class="w-[7px] h-[18px] border-l border-[#c4c4c4]"></i>
          <div class="w-[51px] flex items-center gap-1"><svg class="w-4 h-4"><use href="#move"/></svg>移动</div>
          <div class="w-[50px] flex items-center gap-1"><svg class="w-4 h-4"><use href="#rot"/></svg>旋转</div>
          <i class="w-[7px] h-[18px] border-l border-[#c4c4c4]"></i>
          <div class="w-[51px] flex items-center gap-1"><svg class="w-4 h-4"><use href="#ext"/></svg>延伸</div>
          <div class="w-[50px] flex items-center gap-1"><svg class="w-4 h-4"><use href="#trim"/></svg>修剪</div>
          <i class="w-[6px] h-[18px] border-l border-[#c4c4c4]"></i>
          <div class="w-[51px] flex items-center gap-1"><svg class="w-4 h-4"><use href="#brk"/></svg>打断</div>
          <div class="w-[51px] flex items-center gap-1"><svg class="w-4 h-4"><use href="#mrg"/></svg>合并</div>
          <div class="w-[51px] flex items-center gap-1 text-[#a6a6a6]"><svg class="w-4 h-4"><use href="#spl"/></svg>分割</div>
          <i class="w-[8px] h-[18px] border-l border-[#c4c4c4]"></i>
          <div class="w-[44px] flex items-center gap-1"><svg class="w-4 h-4"><use href="#alg"/></svg>对齐</div>
          <svg class="w-[14px] h-[4px]"><use href="#car" width="7" height="4"/></svg>
          <div class="w-[51px] flex items-center gap-1"><svg class="w-4 h-4"><use href="#ofs"/></svg>偏移</div>
          <div class="w-[50px] flex items-center gap-1"><svg class="w-4 h-4"><use href="#str"/></svg>拉伸</div>
          <i class="w-[6px] h-[18px] border-l border-[#c4c4c4]"></i>
          <div class="flex items-center gap-1 text-[#a6a6a6]"><svg class="w-4 h-4"><use href="#grip"/></svg>设置夹点</div>
        </div>
      </div>
      <div class="mt-[1px] h-[26px] flex">
        <div class="ml-[2px] w-[565px] h-[26px] flex items-center pl-[3px] bg-linear-to-b from-[#fbfbfb] to-[#f0f0f0]">
          <i class="w-[4px] h-[16px] border-l-2 border-dotted border-[#aaa]"></i>
          <div class="w-[58px] h-[24px] bg-white flex items-center justify-between pl-[2px] pr-[4px]">第5层<svg class="w-[7px] h-[4px]"><use href="#car"/></svg></div>
          <div class="ml-[3px] w-[67px] h-[24px] bg-white flex items-center justify-between pl-[2px] pr-[4px]">自定义<svg class="w-[7px] h-[4px]"><use href="#car"/></svg></div>
          <div class="ml-[4px] w-[68px] h-[24px] bg-white flex items-center justify-between pl-[2px] pr-[4px]">自定义线<svg class="w-[7px] h-[4px]"><use href="#car"/></svg></div>
          <div class="ml-[4px] w-[70px] h-[24px] bg-white flex items-center justify-between pl-[2px] pr-[4px]">ZDYX-43<svg class="w-[7px] h-[4px]"><use href="#car"/></svg></div>
          <i class="ml-[4px] w-[7px] h-[18px] border-l border-[#c4c4c4]"></i>
          <div class="w-[50px] flex items-center gap-1"><svg class="w-4 h-4"><use href="#attr"/></svg>属性</div>
          <div class="w-[76px] flex items-center gap-[2px]"><svg class="w-[18px] h-4"><use href="#edit"/></svg>编辑钢筋</div>
          <div class="w-[76px] flex items-center gap-[3px]"><svg class="w-4 h-4"><use href="#list"/></svg>构件列表</div>
          <div class="flex items-center gap-1"><svg class="w-4 h-4"><use href="#pick"/></svg>拾取构件</div>
        </div>
        <div class="ml-[33px] w-[420px] h-[26px] flex items-center pl-[3px] bg-linear-to-b from-[#fbfbfb] to-[#f0f0f0]">
          <i class="w-[7px] h-[16px] border-l-2 border-dotted border-[#aaa]"></i>
          <div class="w-[51px] flex items-center gap-1"><svg class="w-4 h-4"><use href="#twop"/></svg>两点</div>
          <div class="w-[51px] flex items-center gap-1"><svg class="w-4 h-4"><use href="#para"/></svg>平行</div>
          <div class="w-[50px] flex items-center gap-[3px]"><svg class="w-4 h-4"><use href="#ang"/></svg>点角</div>
          <svg class="w-[12px] h-[4px]"><use href="#car" width="7" height="4"/></svg>
          <div class="w-[74px] flex items-center gap-1"><svg class="w-4 h-4"><use href="#thr"/></svg>三点辅轴</div>
          <svg class="w-[13px] h-[4px]"><use href="#car" width="7" height="4"/></svg>
          <div class="w-[75px] flex items-center gap-1"><svg class="w-4 h-4"><use href="#del"/></svg>删除辅轴</div>
          <div class="w-[73px] flex items-center gap-[4px]"><svg class="w-4 h-4"><use href="#dim"/></svg>尺寸标注</div>
          <svg class="w-[7px] h-[4px]"><use href="#car"/></svg>
        </div>
      </div>
      <div class="mt-[3px] ml-[414px] w-[30px] h-[20px] bg-[#f8f8f8] flex items-center justify-center">
        <i class="w-[2px] h-[16px] border-l-2 border-dotted border-[#aaa]"></i>
      </div>
      <div class="mt-[6px] ml-[2px] w-[486px] h-[26px] flex items-center pl-[3px] bg-linear-to-b from-[#fbfbfb] to-[#f0f0f0]">
        <i class="w-[10px] h-[16px] border-l-2 border-dotted border-[#aaa]"></i>
        <div class="w-[46px] flex items-center gap-[8px]"><svg class="w-[7px] h-[12px]"><use href="#cur"/></svg>选择</div>
        <svg class="w-[13px] h-[4px]"><use href="#car" width="7" height="4"/></svg>
        <i class="w-[8px] h-[18px] border-l border-[#c4c4c4]"></i>
        <div class="w-[49px] flex items-center gap-[2px]"><svg class="w-4 h-4"><use href="#lin"/></svg>直线</div>
        <div class="w-[75px] flex items-center gap-[4px]"><svg class="w-4 h-4"><use href="#lng"/></svg>点加长度</div>
        <div class="w-[74px] flex items-center gap-[4px]"><svg class="w-4 h-4"><use href="#arc"/></svg>三点画弧</div>
        <svg class="w-[11px] h-[4px]"><use href="#car" width="7" height="4"/></svg>
        <div class="w-[56px] h-[24px] bg-white flex items-center justify-end pr-[4px]"><svg class="w-[7px] h-[4px]"><use href="#car"/></svg></div>
        <div class="ml-[5px] w-[50px] flex items-center gap-[2px]"><svg class="w-4 h-4"><use href="#rct"/></svg>矩形</div>
        <i class="w-[6px] h-[18px] border-l border-[#c4c4c4]"></i>
        <div class="flex items-center gap-1"><svg class="w-4 h-4"><use href="#smart"/></svg>智能布置<svg class="-ml-[1px] w-[7px] h-[4px]"><use href="#car"/></svg></div>
      </div>

      <!-- 3D canvas -->
      <div class="mt-[2px] h-[481px] bg-black">
        <svg class="block w-[1196px] h-[481px]" viewBox="170 194 1196 481" shape-rendering="crispEdges" font-family="Liberation Sans, sans-serif">
          <!-- axis grid -->
          <g stroke="#f00" stroke-width="1" fill="none">
            <path d="M561.700 675L1366 284M743 675L1366 373M963 675L1366 480M1161.700 675L1366 576M1208 675L1366 600M1306.700 675L1366 646.700"/>
            <path d="M1123.300 490L1366 601M1326.700 391.700L1366 408M903.300 599.300L1066.700 675M911.700 592.700L1091 675M930 583.300L1125 675M948.300 575L1161.700 675M961.700 568.300L1190 675"/>
          </g>
          <g fill="none" stroke="#008000">
            <circle cx="770" cy="661.700" r="12.500"/><circle cx="1101" cy="661.700" r="12.500"/><circle cx="1185.700" cy="661.700" r="12.500"/><circle cx="1332.300" cy="661.700" r="12.500"/><circle cx="1352.300" cy="402.700" r="12.500"/>
          </g>
          <g fill="#d0d0d0" font-size="14" font-weight="bold" text-anchor="middle">
            <text x="769.500" y="667">A1</text><text x="1101" y="667">2</text><text x="1185.700" y="667">A</text><text x="1332.300" y="667">B</text><text x="1352.300" y="408">3</text>
          </g>
          <!-- slab and beam solids -->
          <path d="M443.300 515L460 511.700 661.700 603.300 750 565 751.700 566.700 656.700 612.700z" fill="#595959"/>
          <path d="M460 511.700L495 495.700 650 565 661.700 603.300z" fill="#999"/>
          <path d="M683.300 491.700L716.700 476 730 513.300z" fill="#b0b0b0"/>
          <path d="M716.700 476L723.300 478.300 751.700 566 750 565 733.300 525 730 513.300z" fill="#999"/>
          <path d="M580 454L590 449.300 730 513.300 733.300 525z" fill="#999"/>
          <path d="M495 495.700L580 455 733.300 525 650 565z" fill="#4d4d4d"/>
          <path d="M650 565L733.300 525 750 565 661.700 603.300z" fill="#b0b0b0"/>
          <path d="M443.300 515L802.300 340 808 342 580 452.500 460 511.700z" fill="#595959"/>
          <path d="M414.300 426.700L774 251.700 802.300 340 443.300 515z" fill="#b0b0b0"/>
          <path d="M774 251.700L785.700 246 814.300 334.300 802.300 340z" fill="#0058b4"/>
          <path d="M785.700 246L836 269.300 864 356.700 814.300 334.300z" fill="#004c99"/>
          <path d="M814.300 334.300L864 356.700 852.700 362.700 802.300 340z" fill="#003a73"/>
          <path d="M783 290.600L798.300 284 802.300 296.700 787 303.600z" fill="#b0b0b0"/>
          <!-- orbit ring -->
          <g class="mix-blend-plus-lighter" fill="none" stroke="#909090" shape-rendering="auto">
            <circle cx="767.500" cy="434.500" r="213.500"/><circle cx="767" cy="221" r="13"/><circle cx="554" cy="434" r="13"/><circle cx="981" cy="434" r="13"/><circle cx="767" cy="648" r="13"/>
          </g>
          <!-- axis gizmo -->
          <path d="M225 624L215 592" stroke="#0a74ff" stroke-width="5"/>
          <path d="M210 581L219 591 209 594z" fill="#0a74ff"/>
          <path d="M225 624L256 609" stroke="#f00" stroke-width="5"/>
          <path d="M265 605L253 604 258 613z" fill="#f00"/>
          <path d="M225 624L241 631" stroke="#0f0" stroke-width="5"/>
          <text x="198" y="590" font-size="14" fill="#0a74ff">Z</text>
          <text x="263" y="616" font-size="13" fill="#f00">X</text>
          <text x="250" y="633" font-size="13" fill="#0f0">Y</text>
        </svg>
      </div>

      <!-- snap bar -->
      <div class="mt-[2px] h-[28px] ml-[215px] flex text-[12.2px]">
        <div class="w-[258px] h-[28px] flex items-center pl-[1px] bg-linear-to-b from-[#fbfbfb] to-[#f0f0f0]">
          <i class="w-[6px] h-[16px] border-l-2 border-dotted border-[#aaa]"></i>
          <div class="w-[48px] flex items-center gap-[5px]"><svg class="w-[15px] h-4"><use href="#xpt"/></svg>交点</div>
          <div class="w-[51px] h-[25px] border border-[#0078d7] bg-[#e5f1fb] flex items-center gap-[3px] pl-[2px]"><svg class="w-4 h-4"><use href="#vpt"/></svg>垂点</div>
          <div class="w-[51px] h-[25px] border border-[#0078d7] bg-[#e5f1fb] flex items-center gap-[3px] pl-[2px]"><svg class="w-4 h-4"><use href="#mpt"/></svg>中点</div>
          <div class="ml-[4px] w-[50px] flex items-center gap-[4px]"><svg class="w-[15px] h-4"><use href="#vtx"/></svg>顶点</div>
          <div class="flex items-center gap-[4px]"><svg class="w-4 h-4"><use href="#crd"/></svg>坐标</div>
        </div>
        <div class="ml-[5px] w-[408px] h-[28px] flex items-center pl-[3px] text-[#808080] bg-linear-to-b from-[#fbfbfb] to-[#f0f0f0]">
          <i class="w-[4px] h-[16px] border-l-2 border-dotted border-[#aaa]"></i>
          <div class="w-[57px] h-[26px] bg-white text-black flex items-center justify-between pl-[2px] pr-[4px]">不偏移<svg class="w-[7px] h-[4px]"><use href="#car"/></svg></div>
          <i class="ml-[5px] w-[3px] h-[20px] border-l border-[#c4c4c4]"></i>
          <span class="w-[19px]">X=</span>
          <div class="w-[58px] h-[23px] border border-[#7a7a7a] flex items-center justify-end pr-[4px]">0<div class="ml-[6px] flex flex-col gap-[3px] opacity-50"><svg class="w-[7px] h-[4px] rotate-180"><use href="#car"/></svg><svg class="w-[7px] h-[4px]"><use href="#car"/></svg></div></div>
          <span class="ml-[2px] w-[26px]">mm</span>
          <span class="w-[18px]">Y=</span>
          <div class="w-[58px] h-[23px] border border-[#7a7a7a] flex items-center justify-end pr-[4px]">0<div class="ml-[6px] flex flex-col gap-[3px] opacity-50"><svg class="w-[7px] h-[4px] rotate-180"><use href="#car"/></svg><svg class="w-[7px] h-[4px]"><use href="#car"/></svg></div></div>
          <span class="ml-[1px] w-[26px]">mm</span>
          <i class="w-[4px] h-[20px] border-l border-[#c4c4c4]"></i>
          <i class="w-[11px] h-[11px] border border-[#8a8a8a]"></i>
          <span class="ml-[9px] w-[28px] text-black">旋转</span>
          <div class="w-[67px] h-[23px] border border-[#7a7a7a] flex items-center justify-end pr-[4px]">0.000<div class="ml-[6px] flex flex-col gap-[3px] opacity-50"><svg class="w-[7px] h-[4px] rotate-180"><use href="#car"/></svg><svg class="w-[7px] h-[4px]"><use href="#car"/></svg></div></div>
          <span class="ml-[4px]">°</span>
        </div>
      </div>
    </main>
  </div>

  <!-- status bar -->
  <footer class="mt-[1px] h-[20px] shrink-0 flex gap-[3px] text-[12px] leading-none font-['DejaVu_Sans_Mono','Noto_Sans_CJK_SC',monospace] [&_b]:font-normal [&_b]:text-[10px] [&>div]:h-[20px] [&>div]:border [&>div]:border-[#dadada] [&>div]:bg-[#f8f8f8] [&>div]:flex [&>div]:items-center [&>div]:pl-[1px]">
    <div class="w-[147px]"><b>X=7363 Y=-4247</b></div>
    <div class="w-[78px]">层高<b>:2.8m</b></div>
    <div class="w-[96px]">底标高<b>:14.75m</b></div>
    <div class="w-[47px]"><b>1(2)</b></div>
    <div class="w-[914px]"></div>
    <div class="flex-1 ml-[-1px]"><b>310.1 FPS</b></div>
  </footer>

  <!-- windows taskbar -->
  <div class="mt-[1px] h-[40px] shrink-0 flex items-center bg-[#07181e] text-[#dcdcdc] text-[12px]">
    <div class="w-[48px] h-[40px] bg-black flex items-center justify-center">
      <svg class="w-[16px] h-[17px]" viewBox="0 0 16 17"><path d="M0 2.500L7 1.500V8H0zM8 1.300L16 0V8H8zM0 9h7v6.500L0 14.500zM8 9h8v8l-8-1.300z" fill="#fff"/></svg>
    </div>
    <div class="w-[344px] h-[40px] bg-[#f2f2f2] flex items-center pl-[10px] text-[14px] text-[#444]">
      <svg class="w-[20px] h-[20px] mr-[10px]" viewBox="0 0 20 20"><circle cx="10" cy="10" r="8" fill="none" stroke="#111" stroke-width="2.500"/></svg>
      <span class="w-[277px]">在这里输入你要搜索的内容</span>
      <svg class="w-[11px] h-[18px]" viewBox="0 0 11 18"><rect x="3" y=".5" width="5" height="11" rx="2.500" fill="none" stroke="#222"/><path d="M1 8c0 6 9 6 9 0M5.500 13v4M3 17h5" fill="none" stroke="#222"/></svg>
    </div>
    <!-- pinned apps -->
    <svg class="ml-[17px] w-[17px] h-[16px]" viewBox="0 0 17 16"><path d="M3.500 2.500h10v11h-10zM1 .5h11M1 15.500h11M16 3v1M16 7v1M16 11v1" fill="none" stroke="#fff"/></svg>
    <svg class="ml-[30px] w-[22px] h-[22px]" viewBox="0 0 22 22"><path d="M11 11C5 11 1 8 2 4s7-3 9 7zM11 11c0-6 3-10 7-9s3 7-7 9zM11 11c6 0 10 3 9 7s-7 3-9-7zM11 11c0 6-3 10-7 9s-3-7 7-9z" fill="#e4e4e4"/></svg>
    <svg class="ml-[30px] w-[22px] h-[24px]" viewBox="0 0 22 24"><path d="M4 12h14c0-9-13-9-14 0 0 9 12 9 14 3" fill="none" stroke="#f2f2f2" stroke-width="3"/><path d="M1 22C1 16 11 4 21 1" fill="none" stroke="#ddd"/></svg>
    <svg class="ml-[29px] w-[28px] h-[26px]" viewBox="0 0 28 26"><path d="M9 8a8 8 0 1 0 8 8 6 6 0 1 0-6 6 4 4 0 1 0-2-7" fill="none" stroke="#d8d8d8" stroke-width="1.500"/><path d="M19 1c3 0 4 3 4 6s1 4 2 5H13c1-1 2-2 2-5s1-6 4-6z" fill="#f5a623"/><circle cx="19" cy="14" r="2" fill="#f5a623"/></svg>
    <i class="ml-[13px] w-[3px] h-[20px] border-x border-[#3a4a50]"></i>
    <div class="relative ml-[19px] w-[38px] h-[40px] flex items-center justify-center border-b-2 border-[#76b9ed]">
      <svg class="w-[24px] h-[26px]" viewBox="0 0 24 26"><path d="M20 4C12-1 3 5 3 13c0 8 7 12 13 11 5-1 7-5 6-9l-8-1 1 4 3 1c-3 4-9 1-9-6 0-5 5-8 11-5z" fill="#26a5ee"/></svg>
    </div>
    <div class="ml-[12px] w-[38px] h-[40px] flex items-center justify-center border-b-2 border-[#76b9ed]">
      <div class="w-[24px] h-[28px] rounded-[4px] bg-[#1a8ae6] flex items-center justify-center">
        <svg class="w-[18px] h-[20px]" viewBox="0 0 18 20"><path d="M9 2v16M2 9h14" stroke="#fff" stroke-width="3"/></svg>
      </div>
    </div>
    <div class="ml-[9px] w-[40px] h-[40px] flex items-center justify-center border-b-2 border-[#76b9ed]">
      <svg class="w-[24px] h-[30px]" viewBox="0 0 24 30"><rect width="24" height="30" rx="2" fill="#f0a020"/><rect x="4" y="7" width="15" height="18" fill="#fbe9b8" transform="rotate(-8 11 16)"/><path d="M7 12l8-1M7 16l8-1M7 20l8-1" stroke="#b89040"/><path d="M14 16L21 3" stroke="#a0481a" stroke-width="2"/></svg>
    </div>
    <!-- toolbar scroller and tray -->
    <div class="ml-[71px] w-[17px] h-[40px] bg-[#e6e6e6] flex flex-col items-center justify-center gap-[14px]">
      <svg class="w-[9px] h-[6px] rotate-180"><use href="#dn"/></svg>
      <svg class="w-[9px] h-[6px]"><use href="#dn"/></svg>
    </div>
    <i class="ml-[13px] w-[3px] h-[20px] border-x border-[#3a4a50]"></i>
    <span class="ml-[9px] w-[24px]">链接</span>
    <svg class="ml-[26px] w-[15px] h-[16px]" viewBox="0 0 15 16"><circle cx="10" cy="4" r="3" fill="none" stroke="#ddd"/><circle cx="5" cy="8" r="2.500" fill="none" stroke="#ddd"/><path d="M1 15c0-5 7-5 8 0M8 8c3-1 6 1 6 4" fill="none" stroke="#ddd"/></svg>
    <div class="ml-[38px] w-[58px] flex flex-col items-center leading-[20px]"><span>30%</span><span>CPU使用</span></div>
    <svg class="ml-[3px] w-[12px] h-[7px]" viewBox="0 0 12 7"><path d="M1 6l5-5 5 5" fill="none" stroke="#eee"/></svg>
    <svg class="ml-[12px] w-[12px] h-[14px]" viewBox="0 0 12 14"><path d="M6 0c3 0 4 2 4 5s1 4 2 6H0c1-2 2-3 2-6s1-5 4-5z" fill="#fff"/><rect x="4" y="12" width="4" height="2" fill="#fff"/></svg>
    <svg class="ml-[10px] w-[16px] h-[13px]" viewBox="0 0 16 13"><path d="M3 3h12v8H3zM0 5h3M1 1v4M3 1v2" fill="none" stroke="#fff"/><path d="M3 3h3v8H3z" fill="#fff"/></svg>
    <svg class="ml-[10px] w-[14px] h-[14px]" viewBox="0 0 14 14"><path d="M1 13a12 12 0 0 1 12-12M4 13a9 9 0 0 1 9-9M7 13a6 6 0 0 1 6-6" fill="none" stroke="#9ba6aa"/><circle cx="12" cy="12" r="1.500" fill="#fff"/></svg>
    <svg class="ml-[7px] w-[16px] h-[14px]" viewBox="0 0 16 14"><path d="M1 5h3l4-4v12L4 9H1zM11 4c1 2 1 4 0 6M14 2c1 3 1 7 0 10" fill="none" stroke="#eee"/></svg>
    <svg class="ml-[9px] w-[23px] h-[15px]" viewBox="0 0 23 15"><rect x=".5" y=".5" width="22" height="14" fill="none" stroke="#eee"/><path d="M3 4h17M3 7h17" stroke="#eee" stroke-dasharray="1 1"/><path d="M6 11h11" stroke="#eee"/></svg>
    <span class="ml-[9px] w-[14px] text-[19px] text-white leading-none font-['Liberation_Sans',sans-serif]">A</span>
    <svg class="ml-[13px] w-[16px] h-[18px]" viewBox="0 0 16 18"><path d="M1 3l14-3 1 14-14 4z" fill="#e8421e"/><path d="M11 5H6v4h5v4H5" fill="none" stroke="#fff" stroke-width="2"/></svg>
    <div class="ml-[8px] w-[80px] flex flex-col items-center text-[12.5px] leading-[20px] text-white"><span>14:22</span><span>2018/9/13</span></div>
    <div class="relative ml-[8px] w-[16px] h-[14px] bg-white -mt-[2px]">
      <span class="absolute left-[5px] top-[7px] w-[16px] h-[16px] rounded-full bg-[#555] border border-[#222] flex items-center justify-center text-[11px] font-bold leading-none text-white">1</span>
    </div>
  </div>
</div>
</body>
</html>
